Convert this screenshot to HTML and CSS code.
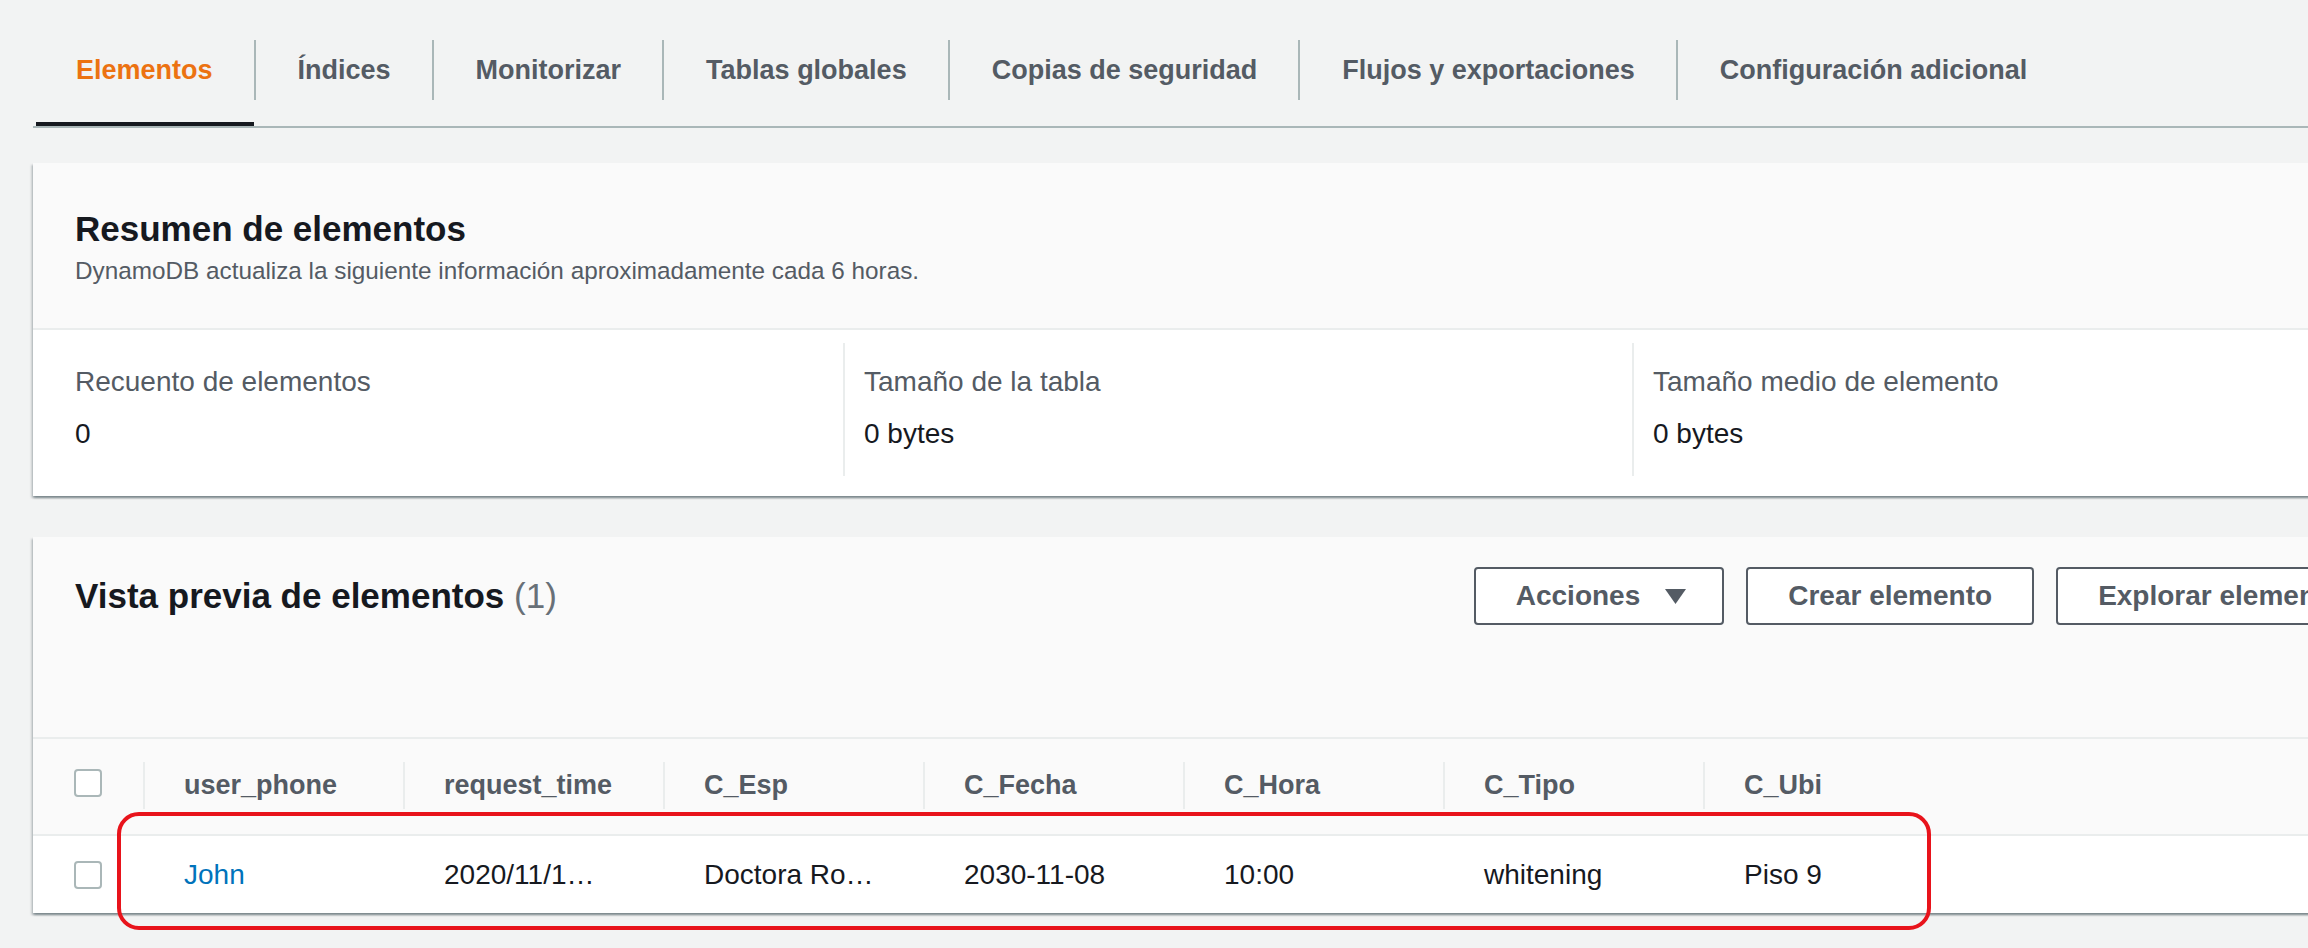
FILE: index.html
```html
<!DOCTYPE html>
<html lang="es">
<head>
<meta charset="utf-8">
<title>Elementos</title>
<link rel="stylesheet" href="styles.css">
</head>
<body>
<div class="page">
  <div class="main">
    <ul class="tabs">
      <li class="tab active"><a>Elementos</a></li>
      <li class="tab"><a>Índices</a></li>
      <li class="tab"><a>Monitorizar</a></li>
      <li class="tab"><a>Tablas globales</a></li>
      <li class="tab"><a>Copias de seguridad</a></li>
      <li class="tab"><a>Flujos y exportaciones</a></li>
      <li class="tab"><a>Configuración adicional</a></li>
    </ul>

    <section class="card summary">
      <header class="card-head">
        <h2 class="card-title">Resumen de elementos</h2>
        <p class="card-desc">DynamoDB actualiza la siguiente información aproximadamente cada 6 horas.</p>
      </header>
      <div class="stats">
        <div class="stat">
          <div class="stat-label">Recuento de elementos</div>
          <div class="stat-value">0</div>
        </div>
        <div class="stat">
          <div class="stat-label">Tamaño de la tabla</div>
          <div class="stat-value">0 bytes</div>
        </div>
        <div class="stat">
          <div class="stat-label">Tamaño medio de elemento</div>
          <div class="stat-value">0 bytes</div>
        </div>
      </div>
    </section>

    <section class="card preview">
      <header class="card-head preview-head">
        <h2 class="card-title">Vista previa de elementos <span class="count">(1)</span></h2>
        <div class="actions">
          <button class="btn">Acciones <svg class="caret" width="21" height="15" viewBox="0 0 21 15"><polygon points="0,0 21,0 10.5,15" fill="#545b64"/></svg></button>
          <button class="btn">Crear elemento</button>
          <button class="btn">Explorar elementos</button>
        </div>
      </header>
      <table class="items">
        <colgroup>
          <col class="c-check">
          <col class="c-data"><col class="c-data"><col class="c-data"><col class="c-data">
          <col class="c-data"><col class="c-data"><col class="c-data">
          <col>
        </colgroup>
        <thead>
          <tr>
            <th class="check-cell"><span class="checkbox"></span></th>
            <th><div class="th-in">user_phone</div></th>
            <th><div class="th-in">request_time</div></th>
            <th><div class="th-in">C_Esp</div></th>
            <th><div class="th-in">C_Fecha</div></th>
            <th><div class="th-in">C_Hora</div></th>
            <th><div class="th-in">C_Tipo</div></th>
            <th><div class="th-in">C_Ubi</div></th>
            <th></th>
          </tr>
        </thead>
        <tbody>
          <tr>
            <td class="check-cell"><span class="checkbox"></span></td>
            <td><a class="link">John</a></td>
            <td>2020/11/1…</td>
            <td>Doctora Ro…</td>
            <td>2030-11-08</td>
            <td>10:00</td>
            <td>whitening</td>
            <td>Piso 9</td>
            <td></td>
          </tr>
        </tbody>
      </table>
      <div class="highlight"></div>
    </section>
  </div>
</div>
</body>
</html>
```

FILE: styles.css
```css
html {
  overflow: hidden;
  background: #f2f3f3;
}

body {
  margin: 0;
  padding: 0;
  background: #f2f3f3;
  font-family: "Liberation Sans", Arial, sans-serif;
  color: #16191f;
}

.page {
  padding: 0 0 60px 33px;
}

.main {
  width: 2409px;
}

/* Tabs */
.tabs {
  list-style: none;
  margin: 0;
  padding: 40px 0 0 3px;
  display: flex;
  border-bottom: 2px solid #aab7b8;
}

.tab {
  padding-bottom: 22px;
  border-bottom: 4px solid transparent;
}

.tab a {
  display: block;
  line-height: 60px;
  padding: 0 41px 0 40px;
  font-size: 27px;
  font-weight: bold;
  color: #545b64;
  white-space: nowrap;
}

.tab + .tab a {
  border-left: 2px solid #aab7b8;
  padding-left: 42px;
  padding-right: 41px;
}

.tab.active {
  border-bottom-color: #16191f;
}

.tab.active a {
  color: #ec7211;
}

/* Cards */
.card {
  background: #fff;
  box-shadow: 0 2px 2px rgba(0, 28, 36, 0.3), 2px 2px 2px rgba(0, 28, 36, 0.15), -2px 2px 2px rgba(0, 28, 36, 0.15);
}

.summary {
  margin-top: 35px;
}

.preview {
  margin-top: 41px;
  position: relative;
}

.card-head {
  background: #fafafa;
  border-bottom: 2px solid #eaeded;
  padding: 44px 42px 41px;
}

.card-title {
  margin: 0;
  font-size: 35px;
  line-height: 44px;
  font-weight: bold;
  color: #16191f;
}

.card-desc {
  margin: 4px 0 0;
  font-size: 24.3px;
  line-height: 32px;
  color: #545b64;
}

/* Summary stats */
.stats {
  display: grid;
  grid-template-columns: repeat(3, 1fr);
  padding: 13px 21px 20px;
}

.stat {
  padding: 17px 21px 20px;
}

.stat + .stat {
  border-left: 2px solid #eaeded;
  padding-left: 19px;
}

.stat-label {
  font-size: 28px;
  line-height: 44px;
  color: #545b64;
}

.stat-value {
  margin-top: 8px;
  font-size: 28px;
  line-height: 44px;
  color: #16191f;
}

/* Preview header */
.preview-head {
  display: flex;
  align-items: center;
  padding: 30px 42px 112px;
}

.count {
  font-weight: normal;
  color: #687078;
}

.actions {
  margin-left: auto;
  display: flex;
  gap: 22px;
}

.btn {
  height: 58px;
  box-sizing: border-box;
  border: 2px solid #545b64;
  border-radius: 4px;
  background: #fff;
  padding: 0 40px;
  font-family: "Liberation Sans", Arial, sans-serif;
  font-size: 28px;
  font-weight: bold;
  color: #545b64;
  display: flex;
  align-items: center;
  white-space: nowrap;
}

.caret {
  margin-left: 25px;
  margin-right: -4px;
}

/* Table */
.items {
  width: 100%;
  border-collapse: collapse;
  table-layout: fixed;
}

.c-check {
  width: 110px;
}

.c-data {
  width: 260px;
}

.items thead tr {
  background: #fafafa;
  height: 96px;
  border-bottom: 2px solid #eaeded;
}

.items th {
  padding: 0;
  text-align: left;
  vertical-align: middle;
  font-size: 27px;
  font-weight: bold;
  color: #545b64;
  white-space: nowrap;
}

.th-in {
  border-left: 2px solid #eaeded;
  height: 47px;
  padding-left: 39px;
  display: flex;
  align-items: center;
  margin-top: -3px;
}

.items tbody tr {
  height: 78px;
}

.items td {
  padding: 0 0 0 41px;
  vertical-align: middle;
  font-size: 28px;
  color: #16191f;
  white-space: nowrap;
  overflow: hidden;
}

.items .check-cell {
  padding-left: 41px;
  text-align: left;
}

.checkbox {
  display: block;
  width: 28px;
  height: 28px;
  box-sizing: border-box;
  border: 2px solid #aab7b8;
  border-radius: 4px;
  background: #fff;
}

.items thead .checkbox {
  margin-top: -7px;
}

.link {
  color: #0073bb;
}

/* Annotation overlay */
.highlight {
  position: absolute;
  left: 84px;
  top: 275px;
  width: 1814px;
  height: 118px;
  box-sizing: border-box;
  border: 4px solid #e8131b;
  border-radius: 22px;
  pointer-events: none;
}
```
